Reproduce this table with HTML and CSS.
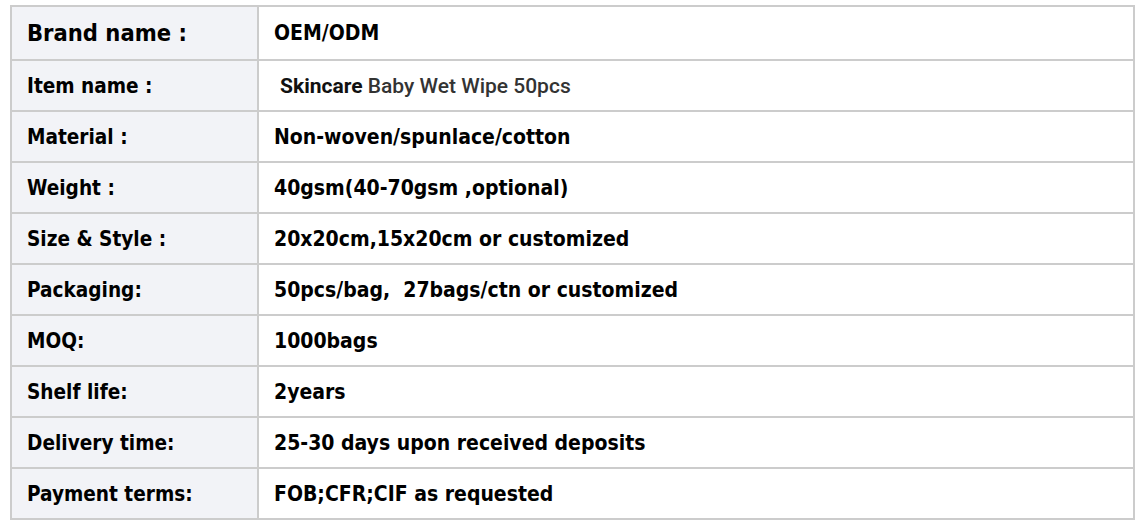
FILE: index.html
```html
<!DOCTYPE html>
<html>
<head>
<meta charset="utf-8">
<link rel="stylesheet" href="styles.css">
</head>
<body>
<table class="spec">
  <tr class="row-first"><th class="label label-big">Brand name :</th><td class="value">OEM/ODM</td></tr>
  <tr><th class="label">Item name :</th><td class="value value-item"><span class="sk">Skincare</span> <span class="baby">Baby Wet Wipe 50pcs</span></td></tr>
  <tr><th class="label">Material :</th><td class="value">Non-woven/spunlace/cotton</td></tr>
  <tr><th class="label">Weight :</th><td class="value">40gsm(40-70gsm ,optional)</td></tr>
  <tr><th class="label">Size &amp; Style :</th><td class="value">20x20cm,15x20cm or customized</td></tr>
  <tr><th class="label">Packaging:</th><td class="value">50pcs/bag,&nbsp; 27bags/ctn or customized</td></tr>
  <tr><th class="label">MOQ:</th><td class="value">1000bags</td></tr>
  <tr><th class="label">Shelf life:</th><td class="value">2years</td></tr>
  <tr><th class="label">Delivery time:</th><td class="value">25-30 days upon received deposits</td></tr>
  <tr><th class="label">Payment terms:</th><td class="value">FOB;CFR;CIF as requested</td></tr>
</table>
</body>
</html>
```
FILE: styles.css
```css
html, body {
  margin: 0;
  padding: 0;
  background: #ffffff;
}
body {
  padding: 5px 0 0 10px;
}
.spec {
  border-collapse: collapse;
  width: 1125px;
  font-family: "DejaVu Sans Condensed", "DejaVu Sans", sans-serif;
  font-weight: bold;
  color: #000;
}
.spec th, .spec td {
  border: 2px solid #cccccc;
  height: 49px;
  padding: 0 0 0 15px;
  text-align: left;
  vertical-align: middle;
}
.spec .row-first th, .spec .row-first td {
  height: 52px;
}
.label {
  width: 230px;
  background: #f2f3f7;
  font-size: 20.6px;
}
.label-big {
  font-size: 23.5px;
}
.value {
  background: #ffffff;
  font-size: 21px;
}
.value-item {
  font-family: Roboto, "Liberation Sans", sans-serif;
  padding-left: 21px !important;
  font-size: 21px;
}
.sk {
  color: #111;
  font-weight: 700;
}
.baby {
  color: #333;
  font-weight: 500;
}
```
